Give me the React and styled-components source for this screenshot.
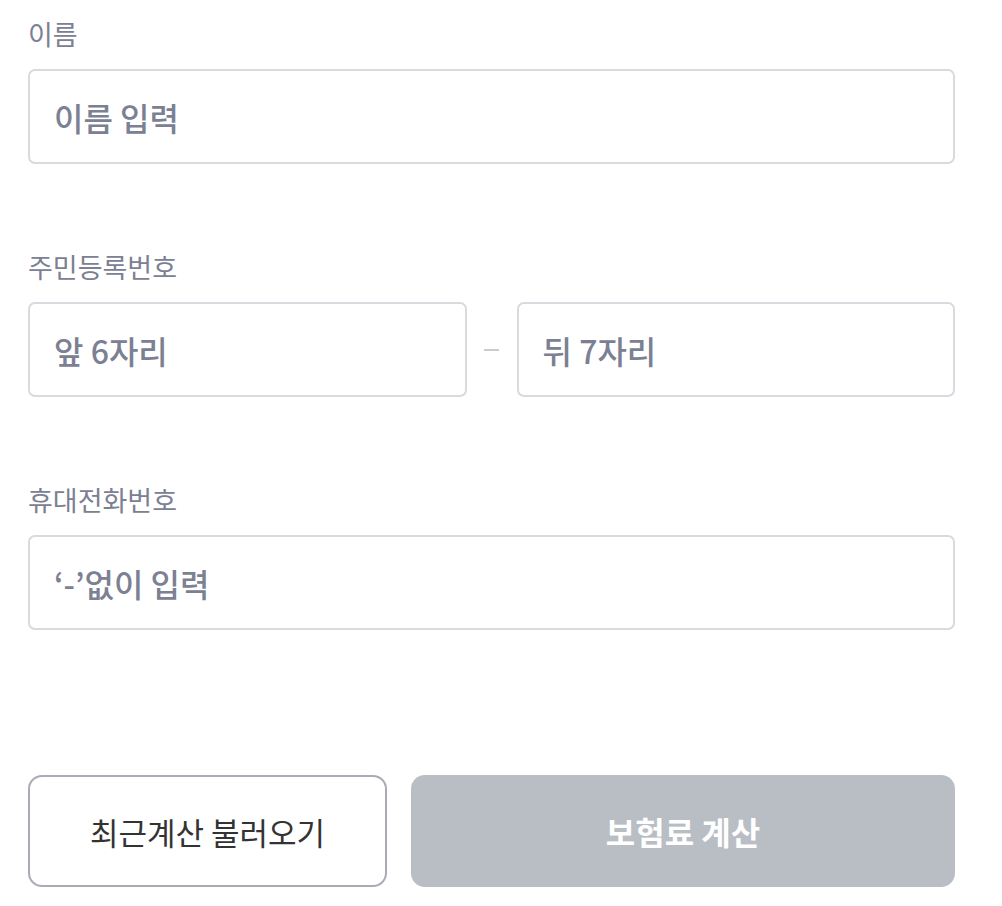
import React from "react";
import styled, { createGlobalStyle } from "styled-components";

const GlobalStyle = createGlobalStyle`
  html, body {
    margin: 0;
    padding: 0;
    background: #ffffff;
  }
  body {
    font-family: "Noto Sans CJK KR", "Noto Sans", sans-serif;
  }
  * {
    box-sizing: border-box;
  }
`;

const Page = styled.div`
  width: 1002px;
  height: 906px;
  padding: 16px 47px 0 28px;
  display: flex;
  flex-direction: column;
`;

const Field = styled.div`
  display: flex;
  flex-direction: column;
  gap: 17px;
  margin-bottom: ${({ $last }) => ($last ? "145px" : "85px")};
`;

const Label = styled.label`
  font-size: 27px;
  line-height: 36px;
  color: #7c8093;
`;

const Row = styled.div`
  display: flex;
  align-items: center;
`;

const Input = styled.input`
  flex: 1;
  min-width: 0;
  height: 95px;
  padding: 0 24px;
  border: 2px solid #d8dadf;
  border-radius: 7px;
  background: #fff;
  font-family: inherit;
  font-size: 32px;
  font-weight: 500;
  color: #333;
  outline: none;

  &::placeholder {
    color: #7c8093;
  }
`;

const Dash = styled.span`
  width: 50px;
  display: flex;
  justify-content: center;

  &::before {
    content: "";
    width: 15px;
    height: 2px;
    background: #c8cbd0;
  }
`;

const Buttons = styled.div`
  display: grid;
  grid-template-columns: 359px 1fr;
  gap: 24px;
`;

const Button = styled.button`
  height: 112px;
  border-radius: 14px;
  font-family: inherit;
  font-size: ${({ $primary }) => ($primary ? "32px" : "31px")};
  cursor: pointer;
  border: ${({ $primary }) => ($primary ? "none" : "2px solid #a9acb5")};
  background: ${({ $primary }) => ($primary ? "#b9bdc4" : "#fff")};
  color: ${({ $primary }) => ($primary ? "#fff" : "#333")};
  font-weight: ${({ $primary }) => ($primary ? 700 : 400)};
`;

export default function App() {
  return (
    <>
      <GlobalStyle />
      <Page>
        <Field>
          <Label>이름</Label>
          <Row>
            <Input placeholder="이름 입력" />
          </Row>
        </Field>
        <Field>
          <Label>주민등록번호</Label>
          <Row>
            <Input placeholder="앞 6자리" />
            <Dash />
            <Input placeholder="뒤 7자리" />
          </Row>
        </Field>
        <Field $last>
          <Label>휴대전화번호</Label>
          <Row>
            <Input placeholder="‘-’없이 입력" />
          </Row>
        </Field>
        <Buttons>
          <Button>최근계산 불러오기</Button>
          <Button $primary>보험료 계산</Button>
        </Buttons>
      </Page>
    </>
  );
}
